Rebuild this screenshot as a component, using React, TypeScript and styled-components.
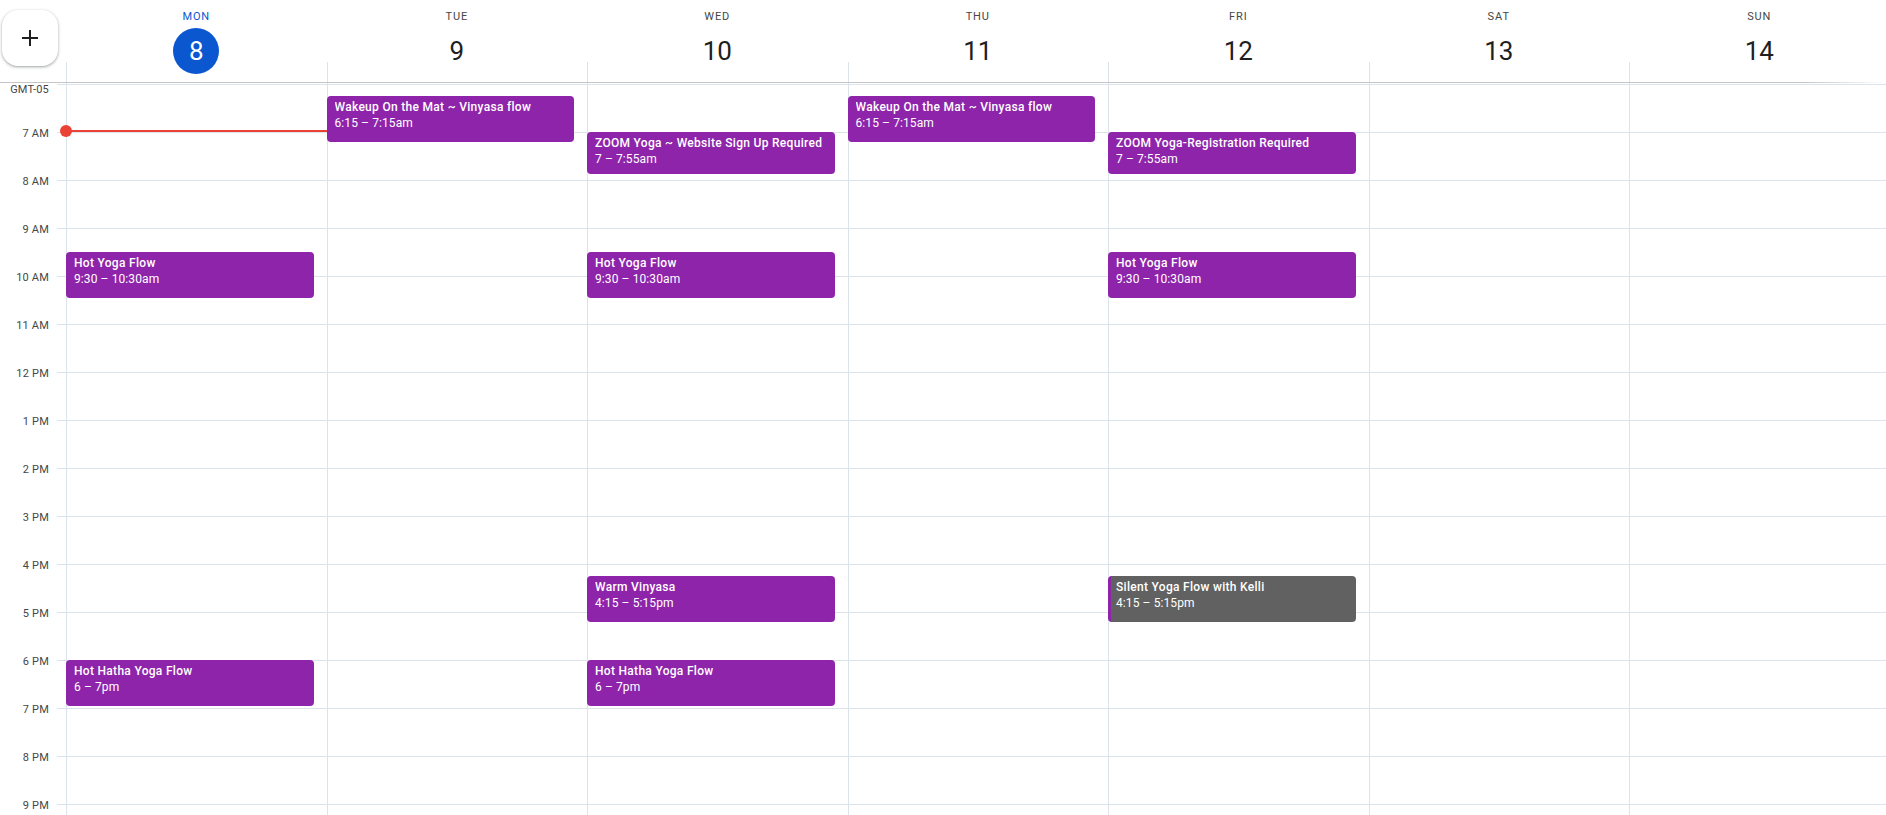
import React from "react";
import styled, { createGlobalStyle, css } from "styled-components";

const HOUR_HEIGHT = 48;
const DAY_START = 6; // the first row of the grid is 6 AM
const GRID_COLUMNS = "66px repeat(7, 260.5px)";
const LINE = "#dde3ea";

interface IDay {
  name: string;
  date: number;
  today?: boolean;
}

interface IEvent {
  day: number;
  title: string;
  time: string;
  start: number;
  end: number;
  muted?: boolean;
}

const at = (h: number, m = 0) => h * 60 + m;

const days: IDay[] = [
  { name: "Mon", date: 8, today: true },
  { name: "Tue", date: 9 },
  { name: "Wed", date: 10 },
  { name: "Thu", date: 11 },
  { name: "Fri", date: 12 },
  { name: "Sat", date: 13 },
  { name: "Sun", date: 14 },
];

const events: IEvent[] = [
  { day: 0, title: "Hot Yoga Flow", time: "9:30 – 10:30am", start: at(9, 30), end: at(10, 30) },
  { day: 0, title: "Hot Hatha Yoga Flow", time: "6 – 7pm", start: at(18), end: at(19) },
  { day: 1, title: "Wakeup On the Mat ~ Vinyasa flow", time: "6:15 – 7:15am", start: at(6, 15), end: at(7, 15) },
  { day: 2, title: "ZOOM Yoga ~ Website Sign Up Required", time: "7 – 7:55am", start: at(7), end: at(7, 55) },
  { day: 2, title: "Hot Yoga Flow", time: "9:30 – 10:30am", start: at(9, 30), end: at(10, 30) },
  { day: 2, title: "Warm Vinyasa", time: "4:15 – 5:15pm", start: at(16, 15), end: at(17, 15) },
  { day: 2, title: "Hot Hatha Yoga Flow", time: "6 – 7pm", start: at(18), end: at(19) },
  { day: 3, title: "Wakeup On the Mat ~ Vinyasa flow", time: "6:15 – 7:15am", start: at(6, 15), end: at(7, 15) },
  { day: 4, title: "ZOOM Yoga-Registration Required", time: "7 – 7:55am", start: at(7), end: at(7, 55) },
  { day: 4, title: "Hot Yoga Flow", time: "9:30 – 10:30am", start: at(9, 30), end: at(10, 30) },
  { day: 4, title: "Silent Yoga Flow with Kelli", time: "4:15 – 5:15pm", start: at(16, 15), end: at(17, 15), muted: true },
];

// labels from 7 AM to 9 PM, the last one that fits in the window
const hours = Array.from({ length: 15 }, (_, i) => i + 7);

function hourLabel(h: number) {
  const suffix = h < 12 ? "AM" : "PM";
  const hh = h % 12 === 0 ? 12 : h % 12;
  return `${hh} ${suffix}`;
}

const GlobalStyle = createGlobalStyle`
  * { box-sizing: border-box; }
  html, body { margin: 0; padding: 0; background: #fff; }
  body {
    font-family: Roboto, "Noto Sans", Arial, sans-serif;
    color: #1f1f1f;
    overflow: hidden;
  }
`;

const Page = styled.div`
  width: 100vw;
  height: 100vh;
  display: flex;
  flex-direction: column;
  overflow: hidden;
`;

const Header = styled.header`
  flex-shrink: 0;
  display: grid;
  grid-template-columns: ${GRID_COLUMNS};
  height: 83px;
  background: linear-gradient(to right, #c6c6c6 calc(100% - 80px), rgba(198, 198, 198, 0))
    left bottom / 100% 1px no-repeat;
`;

const Corner = styled.div`
  padding: 10px 0 0 2px;
`;

const AddButton = styled.button`
  width: 56px;
  height: 56px;
  border: none;
  border-radius: 16px;
  background: #fff;
  display: flex;
  align-items: center;
  justify-content: center;
  padding: 0;
  cursor: pointer;
  box-shadow: 0 1px 2px 0 rgba(60, 64, 67, 0.3), 0 1px 3px 1px rgba(60, 64, 67, 0.15);
`;

const DayHead = styled.div`
  display: flex;
  flex-direction: column;
  align-items: center;
  gap: 4px;
  padding-top: 9px;
  background: linear-gradient(${LINE}, ${LINE}) 0 62px / 1px 20px no-repeat;
`;

const DayName = styled.span<{ $today?: boolean }>`
  font-size: 11px;
  font-weight: 400;
  line-height: 15px;
  letter-spacing: 0.9px;
  text-transform: uppercase;
  color: ${(p) => (p.$today ? "#0b57d0" : "#444746")};
`;

const DateNumber = styled.span<{ $today?: boolean }>`
  width: 46px;
  height: 46px;
  border-radius: 50%;
  display: flex;
  align-items: center;
  justify-content: center;
  font-size: 26px;
  line-height: 1;
  color: ${(p) => (p.$today ? "#fff" : "#1f1f1f")};
  background: ${(p) => (p.$today ? "#0b57d0" : "transparent")};
`;

const Body = styled.div`
  flex: 1;
  min-height: 0;
  display: grid;
  grid-template-columns: ${GRID_COLUMNS};
  background-image: linear-gradient(${LINE} 1px, transparent 1px);
  background-size: 100% ${HOUR_HEIGHT}px;
  background-position: 0 1px;
  overflow: hidden;
`;

const TimeGutter = styled.div`
  display: flex;
  flex-direction: column;
  gap: ${HOUR_HEIGHT - 14}px;
  background: linear-gradient(#fff, #fff) left top / 57px 100% no-repeat;
`;

const TimeLabel = styled.div<{ $first?: boolean }>`
  flex-shrink: 0;
  width: 57px;
  height: 14px;
  margin-bottom: ${(p) => (p.$first ? -4 : 0)}px;
  padding-right: 8px;
  text-align: right;
  font-size: 11px;
  line-height: 14px;
  letter-spacing: 0.2px;
  color: #444746;
  white-space: nowrap;
`;

const DayColumn = styled.div`
  position: relative;
  border-left: 1px solid ${LINE};
`;

const EventCard = styled.div<{ $muted?: boolean }>`
  position: absolute;
  left: -1px;
  right: 13px;
  padding: 3px 8px;
  border-radius: 4px;
  background: #8e24aa;
  color: #fff;
  font-size: 12px;
  line-height: 16px;
  overflow: hidden;
  z-index: 1;
  ${(p) =>
    p.$muted &&
    css`
      background: #616161;
      border-left: 3px solid #8e24aa;
      padding-left: 5px;
    `}
`;

const EventTitle = styled.div`
  font-weight: 500;
  letter-spacing: 0.3px;
  white-space: nowrap;
  overflow: hidden;
  text-overflow: ellipsis;
`;

const EventTime = styled.div`
  letter-spacing: 0.1px;
  white-space: nowrap;
`;

const NowLine = styled.div`
  position: absolute;
  left: -1px;
  right: 0;
  top: 47px;
  height: 2px;
  background: #ea4335;
  z-index: 2;

  &::before {
    content: "";
    position: absolute;
    left: -6px;
    top: -5px;
    width: 12px;
    height: 12px;
    border-radius: 50%;
    background: #ea4335;
  }
`;

function PlusIcon() {
  return (
    <svg width="24" height="24" viewBox="0 0 24 24" aria-hidden>
      <path d="M20 13h-7v7h-2v-7H4v-2h7V4h2v7h7v2z" fill="#1f1f1f" />
    </svg>
  );
}

export default function App() {
  const minuteHeight = HOUR_HEIGHT / 60;

  return (
    <>
      <GlobalStyle />
      <Page>
        <Header>
          <Corner>
            <AddButton aria-label="Create">
              <PlusIcon />
            </AddButton>
          </Corner>
          {days.map((d) => (
            <DayHead key={d.name}>
              <DayName $today={d.today}>{d.name}</DayName>
              <DateNumber $today={d.today}>{d.date}</DateNumber>
            </DayHead>
          ))}
        </Header>

        <Body>
          <TimeGutter>
            <TimeLabel $first>GMT-05</TimeLabel>
            {hours.map((h) => (
              <TimeLabel key={h}>{hourLabel(h)}</TimeLabel>
            ))}
          </TimeGutter>

          {days.map((d, index) => (
            <DayColumn key={d.name}>
              {d.today && <NowLine />}
              {events
                .filter((ev) => ev.day === index)
                .map((ev) => (
                  <EventCard
                    key={ev.title + ev.start}
                    $muted={ev.muted}
                    style={{
                      top: 1 + (ev.start - DAY_START * 60) * minuteHeight,
                      height: (ev.end - ev.start) * minuteHeight - 2,
                    }}
                  >
                    <EventTitle>{ev.title}</EventTitle>
                    <EventTime>{ev.time}</EventTime>
                  </EventCard>
                ))}
            </DayColumn>
          ))}
        </Body>
      </Page>
    </>
  );
}
